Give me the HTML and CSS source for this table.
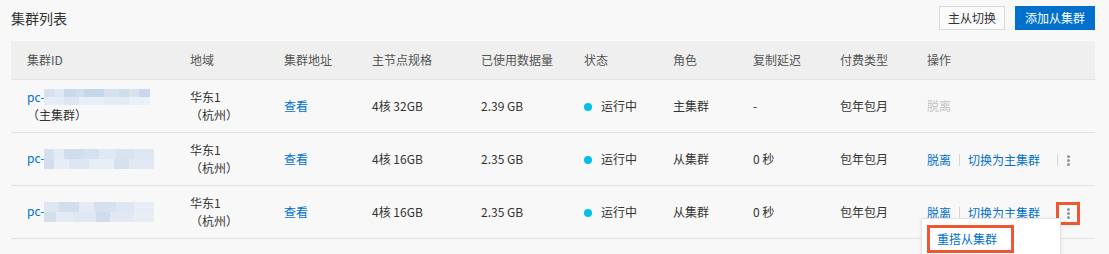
FILE: index.html
```html
<!DOCTYPE html>
<html lang="zh-CN">
<head>
<meta charset="utf-8">
<title>集群列表</title>
<link rel="stylesheet" href="styles.css">
</head>
<body>
<div class="page">
  <div class="top">
    <h1 class="title">集群列表</h1>
    <div class="actions">
      <button class="btn">主从切换</button>
      <button class="btn btn-primary">添加从集群</button>
    </div>
  </div>
  <table class="grid">
    <colgroup>
      <col class="c1"><col class="c2"><col class="c3"><col class="c4"><col class="c5">
      <col class="c6"><col class="c7"><col class="c8"><col class="c9"><col class="c10">
    </colgroup>
    <thead>
      <tr>
        <th>集群ID</th><th>地域</th><th>集群地址</th><th>主节点规格</th><th>已使用数据量</th>
        <th>状态</th><th>角色</th><th>复制延迟</th><th>付费类型</th><th>操作</th>
      </tr>
    </thead>
    <tbody>
      <tr>
        <td><a class="link">pc-</a><span class="mask mask-a"></span><br><span class="sub">（主集群）</span></td>
        <td>华东1<br><span class="sub">（杭州）</span></td>
        <td><a class="link">查看</a></td>
        <td>4核 32GB</td>
        <td>2.39 GB</td>
        <td><span class="dot"></span>运行中</td>
        <td>主集群</td>
        <td>-</td>
        <td>包年包月</td>
        <td><span class="disabled">脱离</span></td>
      </tr>
      <tr>
        <td><a class="link">pc-</a><span class="mask mask-b"></span></td>
        <td>华东1<br><span class="sub">（杭州）</span></td>
        <td><a class="link">查看</a></td>
        <td>4核 16GB</td>
        <td>2.35 GB</td>
        <td><span class="dot"></span>运行中</td>
        <td>从集群</td>
        <td>0 秒</td>
        <td>包年包月</td>
        <td>
          <span class="ops">
            <a class="link">脱离</a><span class="sep"></span><a class="link">切换为主集群</a><span class="sep sep-wide"></span><span class="more"><i></i><i></i><i></i></span>
          </span>
        </td>
      </tr>
      <tr>
        <td><a class="link">pc-</a><span class="mask mask-c"></span></td>
        <td>华东1<br><span class="sub">（杭州）</span></td>
        <td><a class="link">查看</a></td>
        <td>4核 16GB</td>
        <td>2.35 GB</td>
        <td><span class="dot"></span>运行中</td>
        <td>从集群</td>
        <td>0 秒</td>
        <td>包年包月</td>
        <td>
          <span class="ops">
            <a class="link">脱离</a><span class="sep"></span><a class="link">切换为主集群</a><span class="sep sep-wide"></span><span class="more more-hl"><i></i><i></i><i></i></span>
            <span class="menu">
              <span class="menu-item">重搭从集群</span>
            </span>
          </span>
        </td>
      </tr>
    </tbody>
  </table>
</div>
</body>
</html>
```

FILE: styles.css
```css
html {
  background: #f8f8f8;
}
body {
  margin: 0;
  padding: 0;
  font-family: "Noto Sans CJK SC", "Noto Sans", sans-serif;
  font-size: 12px;
  color: #333;
}
.page {
  width: 1109px;
  height: 254px;
  overflow: hidden;
}
.top {
  display: flex;
  align-items: center;
  justify-content: space-between;
  height: 24px;
  padding: 6px 14px 11px 11px;
}
.title {
  margin: 0;
  font-size: 14px;
  font-weight: normal;
  color: #333;
  line-height: 20px;
}
.actions {
  display: flex;
  gap: 10px;
}
.btn {
  height: 24px;
  padding: 0 8px;
  border: 1px solid #d9d9d9;
  background: #fbfbfb;
  color: #333;
  font-family: inherit;
  font-size: 12px;
  line-height: 22px;
  border-radius: 0;
}
.btn-primary {
  background: #0070cc;
  border-color: #0070cc;
  color: #fff;
  padding: 0 9px;
}
.grid {
  margin-left: 11px;
  width: 1084px;
  border-collapse: collapse;
  table-layout: fixed;
}
.c1 { width: 163px; }
.c2 { width: 94px; }
.c3 { width: 88px; }
.c4 { width: 109px; }
.c5 { width: 103px; }
.c6 { width: 89px; }
.c7 { width: 80px; }
.c8 { width: 87px; }
.c9 { width: 87px; }
.c10 { width: 184px; }
.grid th {
  height: 38px;
  padding: 0 16px;
  background: #efefef;
  color: #555;
  font-weight: normal;
  text-align: left;
  border-bottom: 1px solid #e2e2e2;
  line-height: 18px;
  white-space: nowrap;
}
.grid td {
  height: 52px;
  padding: 0 16px;
  border-bottom: 1px solid #e2e2e2;
  line-height: 18px;
  vertical-align: middle;
}
.link {
  color: #0070cc;
  cursor: pointer;
}
.disabled {
  color: #c4c4c4;
}
.mask {
  display: inline-block;
  vertical-align: middle;
  background-color: #dbe5f2;
}
.mask-a {
  width: 106px;
  height: 16px;
  margin-top: -3px;
  background-image:
    linear-gradient(to right, #d6e1ef 0 10px, #dfe7f2 10px 20px, #cad8ea 20px 32px, #d3deec 32px 40px, #c4d6ea 40px 60px, #d6e1ee 60px 75px, #cfdcec 75px 85px, #d9e2ef 85px 95px, #c9d8ec 95px 106px),
    linear-gradient(to right, #e6edf6 0 20px, #dde6f2 20px 35px, #e9eff7 35px 60px, #e4ebf5 60px 85px, #eaf0f7 85px 106px);
  background-size: 106px 8px, 106px 8px;
  background-position: 0 0, 0 8px;
  background-repeat: no-repeat;
}
.mask-b, .mask-c {
  width: 110px;
  height: 20px;
  background-image:
    linear-gradient(to right, #d6e1ef 0 10px, #e3eaf4 10px 20px, #d1ddec 20px 40px, #d6e1ef 40px 55px, #e0e8f3 55px 72px, #d9e3f0 72px 90px, #dfe7f2 90px 110px),
    linear-gradient(to right, #d2deed 0 10px, #e6edf6 10px 25px, #dde6f2 25px 45px, #e8eef6 45px 70px, #d5e0ee 70px 85px, #e2e9f4 85px 110px);
  background-size: 110px 10px, 110px 10px;
  background-position: 0 0, 0 10px;
  background-repeat: no-repeat;
}
.mask-c {
  background-image:
    linear-gradient(to right, #dee6f2 0 15px, #d2deed 15px 35px, #e4ebf5 35px 50px, #d6e1ef 50px 72px, #dde6f2 72px 90px, #e6edf6 90px 110px),
    linear-gradient(to right, #d4dfee 0 12px, #e3eaf4 12px 30px, #dfe7f2 30px 52px, #cfdcec 52px 66px, #e2e9f4 66px 90px, #e8eef6 90px 110px);
}
.dot {
  display: inline-block;
  width: 8px;
  height: 8px;
  border-radius: 50%;
  background: #00c1de;
  margin-right: 9px;
  vertical-align: 0;
}
.ops {
  position: relative;
  display: inline-flex;
  align-items: center;
  height: 17px;
  vertical-align: middle;
}
.sep {
  display: inline-block;
  width: 1px;
  height: 12px;
  background: #d5d5d5;
  margin: 0 8px;
}
.sep-wide {
  margin: 0 0 0 17px;
}
.more {
  display: inline-flex;
  flex-direction: column;
  align-items: center;
  justify-content: center;
  gap: 1px;
  width: 18px;
  height: 17px;
  margin-left: 1px;
}
.more i {
  display: block;
  width: 3px;
  height: 3px;
  border-radius: 50%;
  background: #8a96a6;
}
.more-hl {
  outline: 3px solid #ef5631;
}
.menu {
  position: absolute;
  left: -6px;
  top: 13px;
  width: 138px;
  padding: 9px 0 8px;
  background: #fff;
  border: 1px solid #e3e3e3;
  box-shadow: 0 1px 4px rgba(0, 0, 0, 0.08);
  z-index: 5;
}
.menu-item {
  display: block;
  margin: 0 0 0 8px;
  width: 74px;
  height: 22px;
  padding-left: 7px;
  line-height: 22px;
  color: #0070cc;
  outline: 3px solid #ef5631;
  outline-offset: 0;
  white-space: nowrap;
}
```
